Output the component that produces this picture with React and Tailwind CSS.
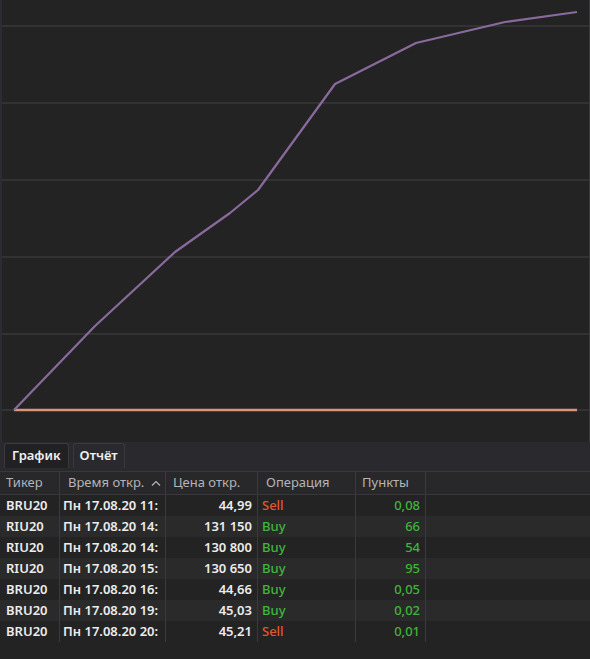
import React from "react";

const points = [
  [14, 410], [95, 326], [175, 252], [230, 213], [258, 190],
  [335, 84], [416, 43], [505, 22], [577, 12],
];

const gridLines = [26, 103, 180, 257, 334, 410];

const rows = [
  { ticker: "BRU20", time: "Пн 17.08.20 11:", price: "44,99", op: "Sell", pts: "0,08" },
  { ticker: "RIU20", time: "Пн 17.08.20 14:", price: "131 150", op: "Buy", pts: "66" },
  { ticker: "RIU20", time: "Пн 17.08.20 14:", price: "130 800", op: "Buy", pts: "54" },
  { ticker: "RIU20", time: "Пн 17.08.20 15:", price: "130 650", op: "Buy", pts: "95" },
  { ticker: "BRU20", time: "Пн 17.08.20 16:", price: "44,66", op: "Buy", pts: "0,05" },
  { ticker: "BRU20", time: "Пн 17.08.20 19:", price: "45,03", op: "Buy", pts: "0,02" },
  { ticker: "BRU20", time: "Пн 17.08.20 20:", price: "45,21", op: "Sell", pts: "0,01" },
];

const Chart = () => (
  <div className="h-[442px] border-l-2 border-l-[#2c2c33] border-r border-r-[#3a3a3e] bg-[#232323]">
    <svg width="587" height="442" className="block">
      {gridLines.map((y) => (
        <line key={y} x1="0" x2="587" y1={y} y2={y} stroke="#393939" strokeWidth="1.5" />
      ))}
      <line x1="12" x2="575" y1="410" y2="410" stroke="#e0917a" strokeWidth="2.5" />
      <polyline
        points={points.map(([x, y]) => `${x - 2},${y}`).join(" ")}
        fill="none"
        stroke="#8a6a9e"
        strokeWidth="2.2"
        strokeLinejoin="round"
      />
    </svg>
  </div>
);

const cols = [
  "w-[60px]",
  "w-[106px]",
  "w-[92px]",
  "w-[98px]",
  "w-[70px]",
];

const App = () => {
  return (
    <div
      className="w-[590px] h-[659px] bg-[#232323] flex flex-col text-[13px]"
      style={{ fontFamily: '"Noto Sans", "Open Sans", sans-serif' }}
    >
      <Chart />

      {/* tabs */}
      <div className="h-[30px] bg-[#2a2a2e] flex items-start pt-[1px] pl-[4px] gap-[4px] border-b border-[#38383c]">
        <div className="h-[25px] px-[7px] flex items-center bg-[#212124] border-t border-x border-[#3a3a3e] rounded-t-[3px] text-[#f0f0f0] font-semibold">
          График
        </div>
        <div className="h-[25px] px-[6px] flex items-center bg-[#2a2a2e] border-t border-x border-[#3a3a3e] rounded-t-[3px] text-[#f0f0f0] font-semibold">
          Отчёт
        </div>
      </div>

      {/* table */}
      <div className="flex flex-col">
        <div className="flex h-[23px] items-center bg-[#28282b] border-b border-[#38383c] text-[#b4b4b8]">
          <div className={`${cols[0]} pl-[6px] h-full flex items-center border-r border-[#3a3a3e]`}>Тикер</div>
          <div className={`${cols[1]} pl-[8px] h-full flex items-center border-r border-[#3a3a3e]`}>
            Время откр.
            <svg width="10" height="7" viewBox="0 0 10 7" className="ml-[7px]">
              <path d="M1 5.5 L5 1.5 L9 5.5" fill="none" stroke="#b4b4b8" strokeWidth="1.2" />
            </svg>
          </div>
          <div className={`${cols[2]} pl-[7px] h-full flex items-center border-r border-[#3a3a3e]`}>Цена откр.</div>
          <div className={`${cols[3]} pl-[8px] h-full flex items-center border-r border-[#3a3a3e]`}>Операция</div>
          <div className={`${cols[4]} pl-[6px] h-full flex items-center border-r border-[#3a3a3e]`}>Пункты</div>
        </div>
        {rows.map((r, i) => (
          <div
            key={i}
            className={`flex h-[21px] items-center font-semibold ${i % 2 === 0 ? "bg-[#232323]" : "bg-[#2a2a2a]"}`}
          >
            <div className={`${cols[0]} pl-[6px] h-full flex items-center border-r border-[#3a3a3e] text-[#ececec]`}>
              {r.ticker}
            </div>
            <div className={`${cols[1]} pl-[3px] h-full flex items-center border-r border-[#3a3a3e] text-[#ececec]`}>
              {r.time}
            </div>
            <div className={`${cols[2]} pr-[5px] h-full flex items-center justify-end border-r border-[#3a3a3e] text-[#ececec]`}>
              {r.price}
            </div>
            <div
              className={`${cols[3]} pl-[4px] h-full flex items-center border-r border-[#3a3a3e] font-medium ${
                r.op === "Sell" ? "text-[#e8552a]" : "text-[#3fb53a]"
              }`}
            >
              {r.op}
            </div>
            <div className={`${cols[4]} pr-[5px] h-full flex items-center justify-end border-r border-[#3a3a3e] font-medium text-[#3fb53a]`}>
              {r.pts}
            </div>
          </div>
        ))}
      </div>
    </div>
  );
};

export default App;
